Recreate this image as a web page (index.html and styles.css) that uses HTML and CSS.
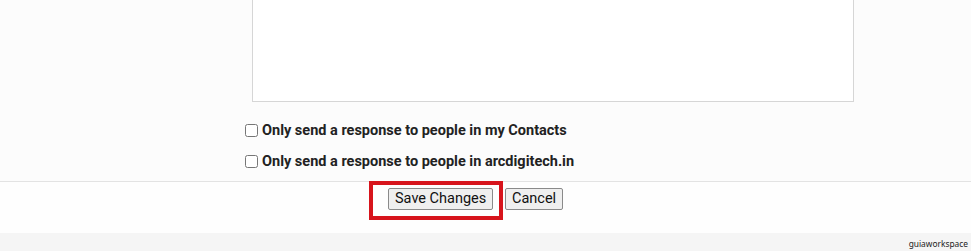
FILE: index.html
```html
<!DOCTYPE html>
<html>
<head>
<meta charset="utf-8">
<link rel="stylesheet" href="styles.css">
</head>
<body>
<div class="page">
  <div class="settings">
    <div class="reply-box"></div>
    <div class="options">
      <label class="option"><input type="checkbox" class="check"><span>Only send a response to people in my Contacts</span></label>
      <label class="option"><input type="checkbox" class="check"><span>Only send a response to people in arcdigitech.in</span></label>
    </div>
  </div>
  <div class="actions">
    <div class="highlight">
      <button class="btn">Save Changes</button>
    </div>
    <button class="btn">Cancel</button>
  </div>
  <div class="footer">guiaworkspace</div>
</div>
</body>
</html>
```
FILE: styles.css
```css
html, body {
  margin: 0;
  padding: 0;
}
body {
  width: 971px;
  height: 251px;
  overflow: hidden;
  background: #fdfdfd;
  font-family: Roboto, "Liberation Sans", sans-serif;
}
.page {
  display: flex;
  flex-direction: column;
  height: 251px;
}
.settings {
  height: 181px;
  background: #fcfcfc;
  border-bottom: 1px solid #e3e3e3;
  box-sizing: content-box;
}
.reply-box {
  margin-left: 252px;
  width: 602px;
  height: 102px;
  background: #ffffff;
  border: 1px solid #d6d6d6;
  border-top: none;
  box-sizing: border-box;
}
.options {
  margin-left: 244px;
  padding-top: 19px;
  display: flex;
  flex-direction: column;
  gap: 13px;
}
.option {
  display: flex;
  align-items: center;
  height: 18px;
  font-size: 14.5px;
  font-weight: 700;
  color: #222222;
}
.check {
  margin: 0 4px 0 1px;
  width: 13px;
  height: 13px;
}
.actions {
  height: 51px;
  background: #fefefe;
  display: flex;
  align-items: flex-start;
  padding-left: 369px;
  box-sizing: border-box;
}
.highlight {
  width: 134px;
  height: 39px;
  border: 4px solid #d7141c;
  box-sizing: border-box;
  padding: 3px 0 0 15px;
  margin-top: -1px;
}
.btn {
  font-family: Roboto, "Liberation Sans", sans-serif;
  font-size: 14.5px;
  color: #111;
  background: #efefef;
  border: 1px solid #8a8a8a;
  border-radius: 2px;
  height: 22px;
  padding: 0 6px;
  line-height: 20px;
}
.actions > .btn {
  margin-left: 2px;
  margin-top: 6px;
}
.footer {
  flex: 1;
  background: #f5f5f5;
  text-align: right;
  padding-right: 3px;
  font-family: "Noto Sans", sans-serif;
  font-size: 8.4px;
  line-height: 12px;
  padding-top: 5px;
  color: #222;
}
```
